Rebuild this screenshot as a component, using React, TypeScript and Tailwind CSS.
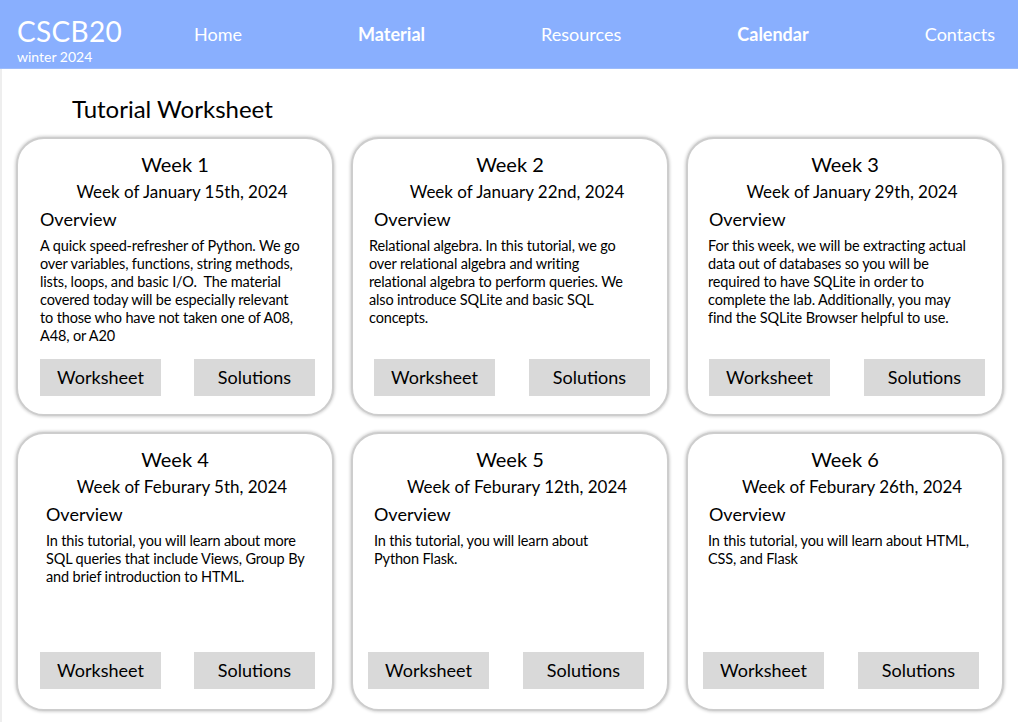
import React from "react";

interface Week {
  id: number;
  title: string;
  date: string;
  lines: string[];
  // small per-card nudges so the text lines up like the original page
  headPad: string;
  bodyPad: string;
  btnPad: string;
  bottom: string;
}

const weeks: Week[] = [
  {
    id: 1,
    title: "Week 1",
    date: "Week of January 15th, 2024",
    lines: [
      "A quick speed-refresher of Python. We go",
      "over variables, functions, string methods,",
      "lists, loops, and basic I/O.\u00a0 The material",
      "covered today will be especially relevant",
      "to those who have not taken one of A08,",
      "A48, or A20",
    ],
    headPad: "pl-[22px]",
    bodyPad: "pl-[22px]",
    btnPad: "pl-[22px] pr-[17px]",
    bottom: "pb-[18px]",
  },
  {
    id: 2,
    title: "Week 2",
    date: "Week of January 22nd, 2024",
    lines: [
      "Relational algebra. In this tutorial, we go",
      "over relational algebra and writing",
      "relational algebra to perform queries. We",
      "also introduce SQLite and basic SQL",
      "concepts.",
    ],
    headPad: "pl-[21px]",
    bodyPad: "pl-[16px]",
    btnPad: "pl-[21px] pr-[17px]",
    bottom: "pb-[18px]",
  },
  {
    id: 3,
    title: "Week 3",
    date: "Week of January 29th, 2024",
    lines: [
      "For this week, we will be extracting actual",
      "data out of databases so you will be",
      "required to have SQLite in order to",
      "complete the lab. Additionally, you may",
      "find the SQLite Browser helpful to use.",
    ],
    headPad: "pl-[21px]",
    bodyPad: "pl-[20px]",
    btnPad: "pl-[21px] pr-[17px]",
    bottom: "pb-[18px]",
  },
  {
    id: 4,
    title: "Week 4",
    date: "Week of Feburary 5th, 2024",
    lines: [
      "In this tutorial, you will learn about more",
      "SQL queries that include Views, Group By",
      "and brief introduction to HTML.",
    ],
    headPad: "pl-[28px]",
    bodyPad: "pl-[28px]",
    btnPad: "pl-[22px] pr-[17px]",
    bottom: "pb-[20px]",
  },
  {
    id: 5,
    title: "Week 5",
    date: "Week of Feburary 12th, 2024",
    lines: ["In this tutorial, you will learn about", "Python Flask."],
    headPad: "pl-[21px]",
    bodyPad: "pl-[21px]",
    btnPad: "pl-[15px] pr-[23px]",
    bottom: "pb-[20px]",
  },
  {
    id: 6,
    title: "Week 6",
    date: "Week of Feburary 26th, 2024",
    lines: ["In this tutorial, you will learn about HTML,", "CSS, and Flask"],
    headPad: "pl-[21px]",
    bodyPad: "pl-[20px]",
    btnPad: "pl-[15px] pr-[23px]",
    bottom: "pb-[20px]",
  },
];

const navItems = [
  { label: "Home", bold: false },
  { label: "Material", bold: true },
  { label: "Resources", bold: false },
  { label: "Calendar", bold: true },
  { label: "Contacts", bold: false },
];

function WeekCard({ week }: { week: Week }) {
  return (
    <div
      className={`h-[279px] rounded-[28px] border-2 border-[#cdcdcd] shadow-[0_0_3px_1px_rgba(0,0,0,0.18)] bg-white flex flex-col pt-[12px] ${week.bottom}`}
    >
      <h3 className="text-center text-[20px] leading-[26px] text-black">{week.title}</h3>
      <p className="text-center text-[17px] leading-[26px] mt-[2px] pl-[14px] text-black">{week.date}</p>
      <p className={`${week.headPad} text-[18px] leading-[26px] mt-[1px] text-black`}>Overview</p>
      <div className={`${week.bodyPad} text-[14.5px] leading-[18px] mt-[5px] text-black tracking-[-0.15px]`}>
        {week.lines.map((line, i) => (
          <div key={i} className="whitespace-nowrap">
            {line}
          </div>
        ))}
      </div>
      <div className={`${week.btnPad} mt-auto flex justify-between`}>
        <button className="w-[121px] h-[37px] bg-[#d9d9d9] text-[18px] text-black">Worksheet</button>
        <button className="w-[121px] h-[37px] bg-[#d9d9d9] text-[18px] text-black">Solutions</button>
      </div>
    </div>
  );
}

export default function App() {
  return (
    <div className="w-[1018px] h-[722px] bg-white font-['Lato','Noto_Sans',sans-serif] overflow-hidden">
      {/* Header */}
      <header className="h-[69px] bg-[#89affe] border-b border-[#9dbcfb] flex items-start text-white">
        <div className="pl-[17px] pt-[15px] w-[194px] shrink-0">
          <div className="text-[28px] leading-[32px] tracking-[0.3px]">CSCB20</div>
          <div className="text-[14px] leading-[16px] mt-[2px]">winter 2024</div>
        </div>
        <nav className="flex-1 flex justify-between pr-[23px] pt-[22px]">
          {navItems.map((item) => (
            <a key={item.label} className={`text-[18px] leading-[24px] ${item.bold ? "font-bold" : ""}`}>
              {item.label}
            </a>
          ))}
        </nav>
      </header>

      {/* Main */}
      <main className="border-l-2 border-[#eeeeee] h-[653px]">
        <h1 className="pl-[70px] pt-[25px] text-[24px] leading-[30px] text-black">Tutorial Worksheet</h1>
        <div className="grid grid-cols-[318px_318px_318px] gap-x-[17px] gap-y-[16px] pl-[14px] mt-[13px]">
          {weeks.map((w) => (
            <WeekCard key={w.id} week={w} />
          ))}
        </div>
      </main>
    </div>
  );
}
